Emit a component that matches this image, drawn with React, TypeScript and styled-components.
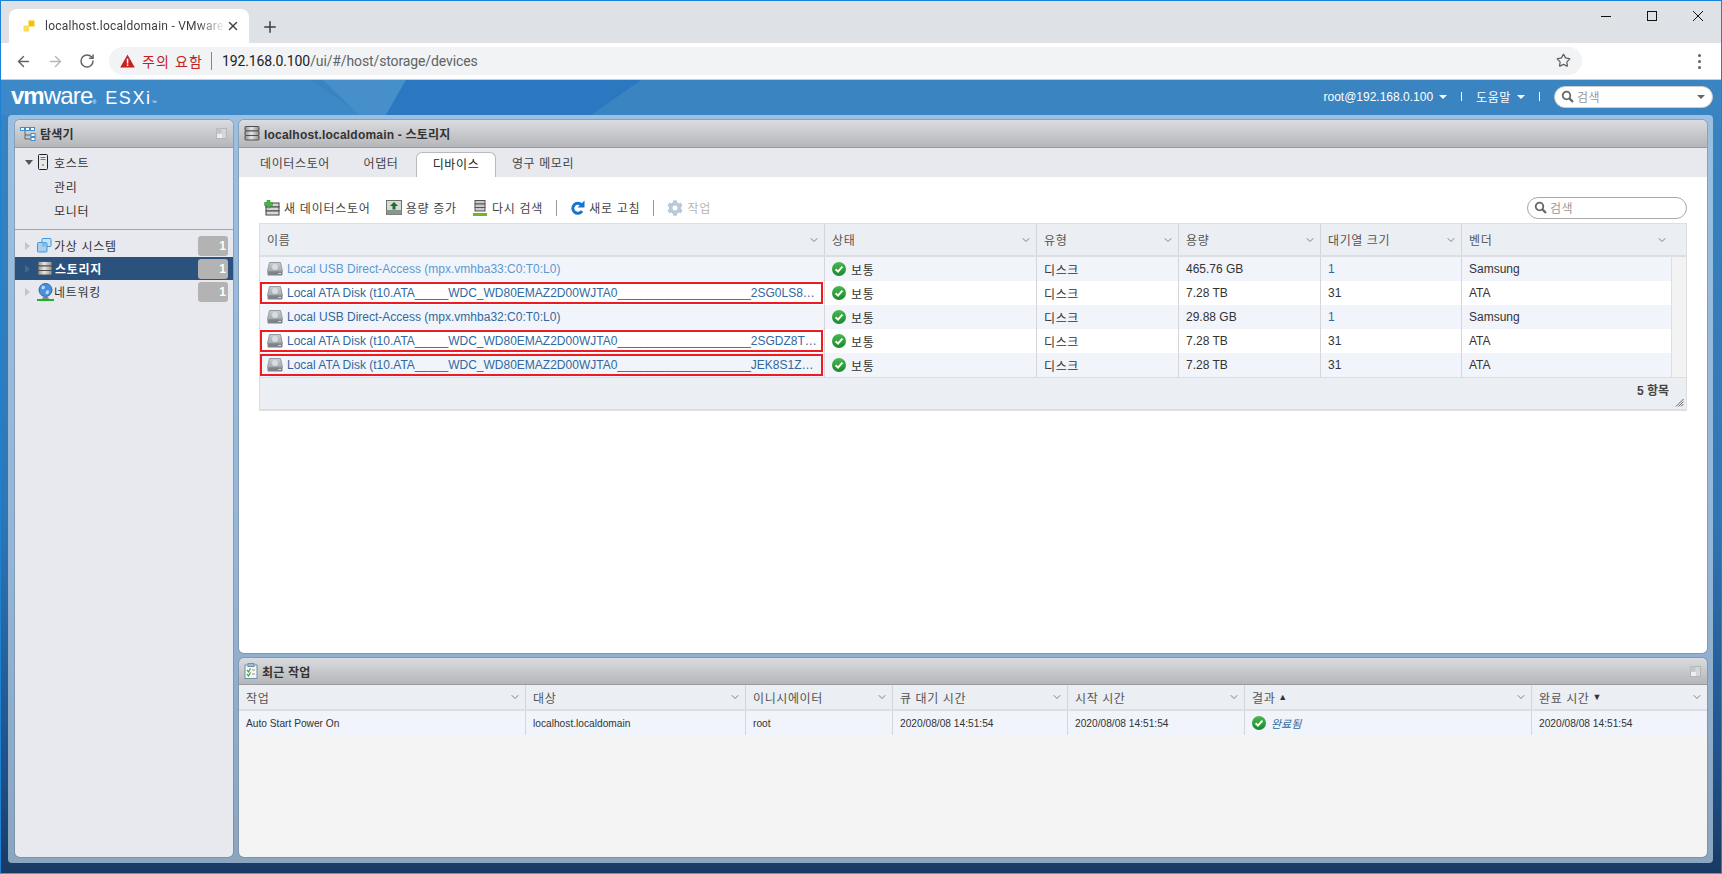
import styled, { createGlobalStyle } from "styled-components";
import { ArrowLeft, ArrowRight, ChevronDown, Plus, RotateCw, Star, X } from "lucide-react";
import { FaCog } from "react-icons/fa";

const FONT = `"Liberation Sans", "Noto Sans CJK KR", sans-serif`;

const GlobalStyle = createGlobalStyle`
  html, body { margin: 0; padding: 0; background: #fff; }
  body { font-family: ${FONT}; font-size: 12px; color: #333; overflow: hidden; }
  * { box-sizing: border-box; }
`;

const Page = styled.div`
  width: 1722px;
  height: 874px;
  display: flex;
  flex-direction: column;
  border: 1px solid #1b82d6;
  border-bottom-color: #7c8ea3;
  overflow: hidden;
`;

/* browser chrome */
const TabStrip = styled.div`
  height: 42px;
  flex-shrink: 0;
  background: #dee1e6;
  display: flex;
  align-items: flex-end;
  padding-left: 8px;
`;

const BrowserTab = styled.div`
  width: 240px;
  height: 34px;
  background: #fff;
  border-radius: 8px 8px 0 0;
  display: flex;
  align-items: center;
  padding: 0 9px 0 14px;
`;

const TabTitle = styled.span`
  font-family: Roboto, "Liberation Sans", sans-serif;
  font-size: 12px;
  letter-spacing: 0.25px;
  color: #3c4043;
  margin-left: 10px;
  flex: 1;
  white-space: nowrap;
  -webkit-mask-image: linear-gradient(to right, #000 84%, transparent 100%);
  mask-image: linear-gradient(to right, #000 84%, transparent 100%);
`;

const NewTab = styled.div`
  width: 18px;
  height: 18px;
  margin: 0 0 7px 12px;
  color: #3c4043;
  display: flex;
`;

const Spacer = styled.div`
  flex: 1;
`;

const WinControls = styled.div`
  display: flex;
  align-self: flex-start;
  height: 29px;
`;

const WinButton = styled.div`
  width: 46px;
  height: 29px;
  display: flex;
  align-items: center;
  justify-content: center;
`;

const BrowserBar = styled.div`
  height: 37px;
  flex-shrink: 0;
  background: #fff;
  border-bottom: 1px solid #ccc;
  display: flex;
  align-items: center;
  padding: 0 0 0 14px;
`;

const NavButton = styled.div<{ $dim?: boolean }>`
  width: 32px;
  display: flex;
  align-items: center;
  color: ${(p) => (p.$dim ? "#b4b6b9" : "#5f6368")};
`;

const Omnibox = styled.div`
  width: 1473px;
  height: 28px;
  margin-left: -2px;
  margin-top: -1px;
  border-radius: 14px;
  background: #f1f3f4;
  display: flex;
  align-items: center;
  padding: 0 11px 0 11px;
`;

const WarnLabel = styled.span`
  margin-left: 7px;
  font-size: 14px;
  color: #c5221f;
  letter-spacing: 1.1px;
`;

const OmniDivider = styled.span`
  width: 1px;
  height: 18px;
  margin: 0 10px 0 8px;
  background: #80868b;
`;

const Url = styled.span`
  flex: 1;
  font-family: Roboto, "Liberation Sans", sans-serif;
  font-size: 14px;
  letter-spacing: -0.12px;
  color: #5f6368;
`;

const UrlHost = styled.span`
  color: #202124;
`;

const MenuDots = styled.div`
  display: flex;
  flex-direction: column;
  gap: 3px;
  margin-left: 116px;
`;

const MenuDot = styled.span`
  width: 3px;
  height: 3px;
  border-radius: 50%;
  background: #5f6368;
`;

/* esxi app */
const Esxi = styled.div`
  flex: 1;
  min-height: 0;
  display: flex;
  flex-direction: column;
  background: linear-gradient(to bottom, #3a84c2 0%, #2f76b4 55%, #1f4f85 88%, #193a63 100%);
`;

const TopBar = styled.div`
  position: relative;
  height: 35px;
  flex-shrink: 0;
  display: flex;
  align-items: center;
  padding: 0 8px 0 10px;
  color: #fff;
`;

const TopDecor = styled.svg`
  position: absolute;
  left: 0;
  top: 0;
`;

const Logo = styled.div`
  position: relative;
  display: flex;
  align-items: baseline;
  color: #fff;
  white-space: nowrap;
  margin-top: -3px;
`;

const LogoVm = styled.span`
  font-size: 24px;
  font-weight: 700;
  letter-spacing: -1px;
`;

const LogoWare = styled.span`
  font-size: 24px;
  letter-spacing: -0.8px;
`;

const LogoEsxi = styled.span`
  font-size: 18px;
  margin-left: 9px;
  letter-spacing: 1.6px;
`;

const LogoMark = styled.sup`
  font-size: 5px;
  line-height: 0;
  vertical-align: 11px;
`;

const TopMenu = styled.div`
  position: relative;
  display: flex;
  align-items: center;
  font-size: 12px;
  font-weight: 400;
  margin-top: -2px;
`;

const Caret = styled.span<{ $color?: string }>`
  display: inline-block;
  width: 0;
  height: 0;
  margin-left: 6px;
  border-left: 4px solid transparent;
  border-right: 4px solid transparent;
  border-top: 4px solid ${(p) => p.$color || "#fff"};
`;

const TopSep = styled.span`
  width: 1px;
  height: 9px;
  margin: 0 14px 0 14px;
  background: #fff;
`;

const TopSearch = styled.div`
  width: 159px;
  height: 22px;
  background: #fff;
  border: 1px solid #ccc;
  border-radius: 11px;
  display: flex;
  align-items: center;
  padding: 0 7px 0 6px;
  color: #999;
`;

const SearchLabel = styled.span`
  flex: 1;
  margin-left: 3px;
  color: #999;
  letter-spacing: 0.5px;
`;

const Frame = styled.div`
  flex: 1;
  min-height: 0;
  margin: 0 8px 10px 7px;
  padding: 5px 6px 6px 7px;
  border-radius: 4px;
  background: linear-gradient(to bottom, #9bc0e2 0%, #94b5d6 60%, #8aa5c0 100%);
  display: flex;
  gap: 6px;
`;

const Panel = styled.section<{ $height?: number }>`
  display: flex;
  flex-direction: column;
  border-radius: 5px;
  overflow: hidden;
  box-shadow: 0 0 0 1px rgba(110, 125, 140, 0.45);
  ${(p) => (p.$height ? `height: ${p.$height}px; flex-shrink: 0;` : "flex: 1; min-height: 0;")}
`;

const Sidebar = styled(Panel)`
  width: 218px;
  flex: none;
  background: #e8e9ee;
`;

const RightColumn = styled.div`
  flex: 1;
  display: flex;
  flex-direction: column;
  gap: 5px;
  min-width: 0;
`;

const PanelHead = styled.header<{ $h: number }>`
  height: ${(p) => p.$h}px;
  flex-shrink: 0;
  background: linear-gradient(to bottom, #dbdcdf, #b5b6b9);
  border-bottom: 1px solid #9a9a9c;
  display: flex;
  align-items: center;
  padding: 0 6px 0 5px;
  gap: 4px;
  color: #333;
  font-weight: 700;
  white-space: nowrap;
`;

const HeadTitle = styled.span`
  flex: 1;
  letter-spacing: 0.2px;
`;

const HostTree = styled.div`
  height: 82px;
  padding-top: 1px;
  border-bottom: 1px solid #a3a4a6;
  flex-shrink: 0;
`;

const TreeRow = styled.div<{ $active?: boolean; $h?: number }>`
  height: ${(p) => p.$h || 23}px;
  display: flex;
  align-items: center;
  background: ${(p) => (p.$active ? "#2a527c" : "transparent")};
  color: ${(p) => (p.$active ? "#fff" : "#333")};
  font-weight: ${(p) => (p.$active ? 700 : 400)};
  padding-right: 5px;
`;

const TreeArrow = styled.span<{ $open?: boolean; $active?: boolean }>`
  width: 0;
  height: 0;
  margin-left: 10px;
  margin-right: ${(p) => (p.$open ? "5px" : "7px")};
  ${(p) =>
    p.$open
      ? "border-left: 4px solid transparent; border-right: 4px solid transparent; border-top: 5px solid #555;"
      : `border-top: 4px solid transparent; border-bottom: 4px solid transparent; border-left: 5px solid ${p.$active ? "#44688f" : "#c4c5c8"};`}
`;

const TreeLabel = styled.span<{ $indent?: number }>`
  flex: 1;
  margin-left: ${(p) => p.$indent ?? 2}px;
  letter-spacing: 0.7px;
`;

const Badge = styled.span`
  width: 30px;
  height: 20px;
  border-radius: 3px;
  background: #b3b3b3;
  color: #fff;
  font-weight: 700;
  text-align: right;
  line-height: 20px;
  padding-right: 2px;
`;

const NavGroup = styled.div`
  padding-top: 4px;
`;

const Tabs = styled.nav`
  height: 29px;
  flex-shrink: 0;
  background: #e8e9ee;
  display: flex;
  align-items: flex-end;
  padding-left: 5px;
`;

const TabItem = styled.div<{ $active?: boolean; $w: number }>`
  width: ${(p) => p.$w}px;
  height: 25px;
  line-height: 24px;
  text-align: center;
  letter-spacing: 0.6px;
  color: #444;
  ${(p) =>
    p.$active
      ? "background: #fff; border: 1px solid #b9babc; border-bottom: 0; border-radius: 6px 6px 0 0; color: #222;"
      : ""}
`;

const Content = styled.div`
  flex: 1;
  min-height: 0;
  background: #fff;
  padding: 0 20px;
`;

const Actions = styled.div`
  height: 46px;
  display: flex;
  align-items: center;
  padding: 15px 0 0 5px;
`;

const Action = styled.div<{ $off?: boolean }>`
  display: flex;
  align-items: center;
  gap: 4px;
  margin-right: 15px;
  letter-spacing: 0.75px;
  color: ${(p) => (p.$off ? "#b5b5b5" : "#444")};
`;

const ActionSep = styled.span`
  width: 1px;
  height: 16px;
  background: #999;
  margin: 0 13px 0 -2px;
`;

const FilterBox = styled.div`
  width: 160px;
  height: 22px;
  border: 1px solid #a9a9a9;
  border-radius: 11px;
  background: #fff;
  display: flex;
  align-items: center;
  padding: 0 6px;
`;

const Table = styled.div`
  border: 1px solid #dcdee0;
  border-width: 1px 1px 2px 1px;
`;

const HeadRow = styled.div<{ $cols: string; $h: number }>`
  display: grid;
  grid-template-columns: ${(p) => p.$cols};
  height: ${(p) => p.$h}px;
  flex-shrink: 0;
  background: #ebeef2;
  border-bottom: 2px solid #dcdee0;
`;

const HeadCell = styled.div<{ $pad?: number }>`
  display: flex;
  align-items: center;
  padding: 0 ${(p) => p.$pad ?? 4}px 0 7px;
  border-right: 1px solid #d3d5d8;
  color: #555;
  letter-spacing: 0.6px;
  white-space: nowrap;
  &:last-child { border-right: 0; }
`;

const HeadText = styled.span`
  flex: 1;
  display: flex;
  align-items: center;
  gap: 3px;
`;

const SortMark = styled.span`
  font-size: 9px;
  color: #333;
`;

const Body = styled.div`
  display: flex;
`;

const Rows = styled.div`
  flex: 1;
  min-width: 0;
`;

const Gutter = styled.div`
  width: 15px;
  background: #f3f3f3;
  border-left: 1px solid #dcdee0;
`;

const Row = styled.div<{ $cols: string; $odd?: boolean; $h: number }>`
  display: grid;
  grid-template-columns: ${(p) => p.$cols};
  height: ${(p) => p.$h}px;
  flex-shrink: 0;
  background: ${(p) => (p.$odd ? "#f1f5fb" : "#fff")};
`;

const Cell = styled.div<{ $small?: boolean }>`
  display: flex;
  align-items: center;
  gap: 5px;
  padding: 0 7px;
  border-right: 1px solid #d3d5d8;
  color: #333;
  font-size: ${(p) => (p.$small ? "10.2px" : "12px")};
  white-space: nowrap;
  overflow: hidden;
  &:last-child { border-right: 0; }
`;

const NameCell = styled(Cell)<{ $marked?: boolean; $light?: boolean }>`
  position: relative;
  gap: 4px;
  color: ${(p) => (p.$light ? "#5a9ad2" : "#30689f")};
  ${(p) =>
    p.$marked
      ? `&::after {
           content: "";
           position: absolute;
           top: 1px;
           bottom: 1px;
           left: 0;
           right: 1px;
           border: 2px solid #ed1c24;
         }`
      : ""}
`;

const Ellipsis = styled.span`
  flex: 1;
  min-width: 0;
  overflow: hidden;
  text-overflow: ellipsis;
`;

const Ko = styled.span`
  letter-spacing: 0.6px;
`;

const LinkNum = styled.span`
  color: #30689f;
`;

const DoneLabel = styled.span`
  font-style: italic;
  font-size: 11px;
  color: #30689f;
`;

const TableFoot = styled.div`
  position: relative;
  height: 32px;
  background: #ebeef2;
  border-top: 1px solid #dcdee0;
  display: flex;
  align-items: center;
  justify-content: flex-end;
  padding: 0 17px 8px 0;
  font-weight: 700;
  color: #444;
`;

const Grip = styled.svg`
  position: absolute;
  right: 2px;
  bottom: 2px;
`;

const TasksBody = styled.div`
  flex: 1;
  background: #f4f4f4;
`;

/* ---- icons ---- */
const Favicon = () => (
  <svg width="12" height="12" viewBox="0 0 12 12">
    <rect x="5.5" y="0.5" width="6" height="6" fill="#f4c20d" />
    <rect x="0.5" y="5.5" width="5.5" height="6" fill="#fbdc5c" />
  </svg>
);

const Warning = () => (
  <svg width="15" height="14" viewBox="0 0 15 14">
    <path d="M7.5 0.5 L14.8 13.5 H0.2 Z" fill="#c5221f" />
    <rect x="6.8" y="4.6" width="1.5" height="5" fill="#fff" />
    <rect x="6.8" y="10.4" width="1.5" height="1.5" fill="#fff" />
  </svg>
);

const StorageIcon = () => (
  <svg width="16" height="15" viewBox="0 0 16 15">
    <defs>
      <linearGradient id="disc" x1="0" x2="1" y1="0" y2="0">
        <stop offset="0" stopColor="#8f8f8f" />
        <stop offset="0.45" stopColor="#e6e6e6" />
        <stop offset="1" stopColor="#8c8c8c" />
      </linearGradient>
    </defs>
    {[0.5, 5, 9.5].map((y) => (
      <rect key={y} x="1" y={y} width="14" height="4.5" rx="0.8" fill="url(#disc)" stroke="#505050" strokeWidth="1" />
    ))}
  </svg>
);

const DiskIcon = () => (
  <svg width="16" height="14" viewBox="0 0 16 14">
    <defs>
      <linearGradient id="hdd" x1="0" x2="0" y1="0" y2="1">
        <stop offset="0" stopColor="#c9ced3" />
        <stop offset="1" stopColor="#a0a8ae" />
      </linearGradient>
    </defs>
    <path d="M2.5 0.5 H13.5 L15.5 9.5 H0.5 Z" fill="url(#hdd)" stroke="#959ba1" />
    <rect x="0.5" y="9.5" width="15" height="4" rx="1" fill="#7d8388" />
    <circle cx="8" cy="5" r="3" fill="#d8dcdf" />
    <rect x="11.5" y="11" width="2.5" height="1" fill="#d8e8d8" />
  </svg>
);

const CheckIcon = () => (
  <svg width="14" height="14" viewBox="0 0 14 14">
    <defs>
      <linearGradient id="ok" x1="0" x2="0" y1="0" y2="1">
        <stop offset="0" stopColor="#4cb84f" />
        <stop offset="1" stopColor="#16892f" />
      </linearGradient>
    </defs>
    <circle cx="7" cy="7" r="7" fill="url(#ok)" />
    <path d="M3.6 7.2 L6 9.6 L10.4 4.6" stroke="#fff" strokeWidth="2" fill="none" />
  </svg>
);

const SearchGlyph = () => (
  <svg width="13" height="13" viewBox="0 0 13 13">
    <circle cx="5.5" cy="5.5" r="3.8" fill="none" stroke="#666" strokeWidth="1.8" />
    <path d="M8.4 8.4 L12 12" stroke="#666" strokeWidth="2.2" />
  </svg>
);

const ExplorerIcon = () => (
  <svg width="16" height="16" viewBox="0 0 16 16">
    <path d="M5 4 V13 H11 M5 9 H11" stroke="#666" fill="none" />
    {[0, 5, 10].map((x) => (
      <rect key={x} x={x + 0.5} y="1.5" width="4" height="3" fill="#fff" stroke="#3e8ed0" />
    ))}
    <rect x="11" y="7.5" width="4" height="3" fill="#fff" stroke="#3e8ed0" />
    <rect x="11" y="11.5" width="4" height="3" fill="#fff" stroke="#3e8ed0" />
  </svg>
);

const CollapseIcon = () => (
  <svg width="11" height="11" viewBox="0 0 11 11">
    <rect x="0.5" y="0.5" width="10" height="10" fill="#d5d6d9" stroke="#b3b4b6" />
    <rect x="0.5" y="0.5" width="5" height="5" fill="#c4c5c8" />
    <rect x="1" y="6" width="5" height="4" fill="#eee" />
  </svg>
);

const HostIcon = () => (
  <svg width="10" height="16" viewBox="0 0 10 16">
    <rect x="0.5" y="0.5" width="9" height="15" rx="1" fill="#e9e9e9" stroke="#222" />
    <rect x="2.5" y="3" width="5" height="1" fill="#777" />
    <rect x="2.5" y="5" width="5" height="1" fill="#777" />
    <circle cx="5" cy="11" r="1" fill="#888" />
  </svg>
);

const VmIcon = () => (
  <svg width="15" height="15" viewBox="0 0 15 15">
    <rect x="5" y="0.5" width="9" height="8" rx="1" fill="#c8e2f6" stroke="#3f97d8" />
    <rect x="0.5" y="4.5" width="9.5" height="9.5" rx="1" fill="#a8d0ee" stroke="#3f97d8" />
    <rect x="5" y="4.5" width="5" height="4" fill="#7fb8e3" />
  </svg>
);

const NetIcon = () => (
  <svg width="17" height="18" viewBox="0 0 17 18">
    <circle cx="8.5" cy="7" r="6.5" fill="#4b8fdc" stroke="#2c67b4" />
    <path d="M5 3 C8 2 9 5 7 6 C5 7 4 6 5 3 M9 8 C12 6 13 9 11 11 C9 12 8 10 9 8" fill="#b8daf6" />
    <path d="M6 14 H11 L12 16 H5 Z" fill="#888" />
    <rect x="0" y="16" width="17" height="2" fill="#22b02a" />
  </svg>
);

const NewStoreIcon = () => (
  <svg width="16" height="16" viewBox="0 0 16 16">
    <rect x="2" y="3" width="13" height="4" fill="#d7d7d7" stroke="#444" />
    <rect x="2" y="7" width="13" height="4" fill="#d7d7d7" stroke="#444" />
    <rect x="2" y="11" width="13" height="4" fill="#d7d7d7" stroke="#444" />
    <path d="M3 0 H6 V2.5 H8.5 V5.5 H6 V8 H3 V5.5 H0.5 V2.5 H3 Z" fill="#46b449" stroke="#2c8a30" strokeWidth="0.5" />
  </svg>
);

const GrowIcon = () => (
  <svg width="16" height="15" viewBox="0 0 16 15">
    <rect x="0.5" y="0.5" width="15" height="14" fill="#d4dcd4" stroke="#6b736b" />
    <rect x="0.5" y="10" width="15" height="4.5" fill="#8d948d" />
    <path d="M8 2 L12 6 H9.5 V9.5 H6.5 V6 H4 Z" fill="#1c6e2a" />
  </svg>
);

const RescanIcon = () => (
  <svg width="16" height="16" viewBox="0 0 16 16">
    <rect x="3" y="0.5" width="10" height="3.5" fill="#c9c9c9" stroke="#555" />
    <rect x="3" y="4" width="10" height="3.5" fill="#c9c9c9" stroke="#555" />
    <rect x="3" y="7.5" width="10" height="3.5" fill="#c9c9c9" stroke="#555" />
    <rect x="1" y="13" width="14" height="3" fill="#6fb52c" />
  </svg>
);

const RefreshIcon = () => (
  <svg width="15" height="16" viewBox="0 0 15 16">
    <path d="M11.5 5 A5 5 0 1 0 12 11" fill="none" stroke="#1874cd" strokeWidth="3" />
    <path d="M14.5 0.5 V7.5 H7.5 Z" fill="#1874cd" />
  </svg>
);

const TaskIcon = () => (
  <svg width="14" height="16" viewBox="0 0 14 16">
    <rect x="1" y="2" width="12" height="13.5" fill="#f5f5f5" stroke="#6d90ad" />
    <rect x="4" y="0.5" width="6" height="3" fill="#a3bdd2" stroke="#6d90ad" />
    <path d="M3 7 L4.5 9 L6.5 5.5 M3 11 L4.5 13 L6.5 9.5" stroke="#34a23a" fill="none" strokeWidth="1.2" />
    <path d="M8 7 H11 M8 11 H11" stroke="#999" />
  </svg>
);

const HeadChevron = () => <ChevronDown size={12} color="#666" strokeWidth={1.6} />;

const DEVICE_COLS = "565px 212px 142px 142px 141px 1fr";
const TASK_COLS = "287px 220px 147px 175px 177px 287px 1fr";

const ATA = "Local ATA Disk (t10.ATA_____WDC_WD80EMAZ2D00WJTA0____________________";

const devices = [
  { name: "Local USB Direct-Access (mpx.vmhba33:C0:T0:L0)", light: true, cap: "465.76 GB", queue: "1", vendor: "Samsung" },
  { name: `${ATA}2SG0LS8TXXXX`, marked: true, cap: "7.28 TB", queue: "31", vendor: "ATA" },
  { name: "Local USB Direct-Access (mpx.vmhba32:C0:T0:L0)", cap: "29.88 GB", queue: "1", vendor: "Samsung" },
  { name: `${ATA}2SGDZ8TXXXXX`, marked: true, cap: "7.28 TB", queue: "31", vendor: "ATA" },
  { name: `${ATA}JEK8S1ZNXXXX`, marked: true, cap: "7.28 TB", queue: "31", vendor: "ATA" },
];

const deviceHeads = ["이름", "상태", "유형", "용량", "대기열 크기", "벤더"];
const tabs = [
  { label: "데이터스토어", w: 102 },
  { label: "어댑터", w: 70 },
  { label: "디바이스", w: 80, active: true },
  { label: "영구 메모리", w: 94 },
];

function App() {
  return (
    <Page>
      <GlobalStyle />
      <TabStrip>
        <BrowserTab>
          <Favicon />
          <TabTitle>localhost.localdomain - VMware</TabTitle>
          <X size={14} color="#3c4043" strokeWidth={2.4} />
        </BrowserTab>
        <NewTab>
          <Plus size={18} strokeWidth={2} />
        </NewTab>
        <Spacer />
        <WinControls>
          <WinButton>
            <svg width="10" height="10" viewBox="0 0 10 10"><path d="M0 5.5 H10" stroke="#111" /></svg>
          </WinButton>
          <WinButton>
            <svg width="10" height="10" viewBox="0 0 10 10"><rect x="0.5" y="0.5" width="9" height="9" fill="none" stroke="#111" /></svg>
          </WinButton>
          <WinButton>
            <svg width="10" height="10" viewBox="0 0 10 10"><path d="M0 0 L10 10 M10 0 L0 10" stroke="#111" /></svg>
          </WinButton>
        </WinControls>
      </TabStrip>

      <BrowserBar>
        <NavButton><ArrowLeft size={17} strokeWidth={2} /></NavButton>
        <NavButton $dim><ArrowRight size={17} strokeWidth={2} /></NavButton>
        <NavButton><RotateCw size={16} strokeWidth={2.2} /></NavButton>
        <Omnibox>
          <Warning />
          <WarnLabel>주의 요함</WarnLabel>
          <OmniDivider />
          <Url><UrlHost>192.168.0.100</UrlHost>/ui/#/host/storage/devices</Url>
          <Star size={15} color="#5f6368" strokeWidth={2} />
        </Omnibox>
        <MenuDots>
          <MenuDot />
          <MenuDot />
          <MenuDot />
        </MenuDots>
      </BrowserBar>

      <Esxi>
        <TopBar>
          <TopDecor width="1720" height="35" viewBox="0 0 1720 35">
            <path d="M0 0 H310 L360 35 H0 Z" fill="#3d89c7" />
            <path d="M322 0 H405 L385 35 H358 Z" fill="#468fca" />
            <path d="M405 0 H1720 V35 H385 Z" fill="#2b78c1" />
            <path d="M640 0 H1720 V35 H590 Z" fill="#3a84c1" />
          </TopDecor>
          <Logo>
            <LogoVm>vm</LogoVm>
            <LogoWare>ware</LogoWare>
            <LogoMark>®</LogoMark>
            <LogoEsxi>ESXi</LogoEsxi>
            <LogoMark>™</LogoMark>
          </Logo>
          <Spacer />
          <TopMenu>
            <span>root@192.168.0.100</span>
            <Caret />
            <TopSep />
            <Ko>도움말</Ko>
            <Caret />
            <TopSep />
            <TopSearch>
              <SearchGlyph />
              <SearchLabel>검색</SearchLabel>
              <Caret $color="#666" />
            </TopSearch>
          </TopMenu>
        </TopBar>

        <Frame>
          <Sidebar>
            <PanelHead $h={28}>
              <ExplorerIcon />
              <HeadTitle>탐색기</HeadTitle>
              <CollapseIcon />
            </PanelHead>
            <HostTree>
              <TreeRow $h={26}>
                <TreeArrow $open />
                <HostIcon />
                <TreeLabel $indent={6}>호스트</TreeLabel>
              </TreeRow>
              <TreeRow $h={23}><TreeLabel $indent={39}>관리</TreeLabel></TreeRow>
              <TreeRow $h={25}><TreeLabel $indent={39}>모니터</TreeLabel></TreeRow>
            </HostTree>
            <NavGroup>
              <TreeRow>
                <TreeArrow />
                <VmIcon />
                <TreeLabel>가상 시스템</TreeLabel>
                <Badge>1</Badge>
              </TreeRow>
              <TreeRow $active>
                <TreeArrow $active />
                <StorageIcon />
                <TreeLabel>스토리지</TreeLabel>
                <Badge>1</Badge>
              </TreeRow>
              <TreeRow>
                <TreeArrow />
                <NetIcon />
                <TreeLabel $indent={0}>네트워킹</TreeLabel>
                <Badge>1</Badge>
              </TreeRow>
            </NavGroup>
          </Sidebar>

          <RightColumn>
            <Panel>
              <PanelHead $h={28}>
                <StorageIcon />
                <HeadTitle>localhost.localdomain - 스토리지</HeadTitle>
              </PanelHead>
              <Tabs>
                {tabs.map((t) => (
                  <TabItem key={t.label} $w={t.w} $active={t.active}>{t.label}</TabItem>
                ))}
              </Tabs>
              <Content>
                <Actions>
                  <Action><NewStoreIcon />새 데이터스토어</Action>
                  <Action><GrowIcon />용량 증가</Action>
                  <Action><RescanIcon />다시 검색</Action>
                  <ActionSep />
                  <Action><RefreshIcon />새로 고침</Action>
                  <ActionSep />
                  <Action $off><FaCog size={16} color="#b9c9da" />작업</Action>
                  <Spacer />
                  <FilterBox>
                    <SearchGlyph />
                    <SearchLabel>검색</SearchLabel>
                  </FilterBox>
                </Actions>
                <Table>
                  <HeadRow $cols={DEVICE_COLS} $h={33}>
                    {deviceHeads.map((h, i) => (
                      <HeadCell key={h} $pad={i === deviceHeads.length - 1 ? 18 : 4}>
                        <HeadText>{h}</HeadText>
                        <HeadChevron />
                      </HeadCell>
                    ))}
                  </HeadRow>
                  <Body>
                    <Rows>
                      {devices.map((d, i) => (
                        <Row key={d.name} $cols={DEVICE_COLS.replace("1fr", "211px")} $odd={i % 2 === 0} $h={24}>
                          <NameCell $marked={d.marked} $light={d.light}>
                            <DiskIcon />
                            <Ellipsis>{d.name}</Ellipsis>
                          </NameCell>
                          <Cell><CheckIcon /><Ko>보통</Ko></Cell>
                          <Cell><Ko>디스크</Ko></Cell>
                          <Cell>{d.cap}</Cell>
                          <Cell>{d.queue === "1" ? <LinkNum>1</LinkNum> : d.queue}</Cell>
                          <Cell>{d.vendor}</Cell>
                        </Row>
                      ))}
                    </Rows>
                    <Gutter />
                  </Body>
                  <TableFoot>
                    5 항목
                    <Grip width="9" height="9" viewBox="0 0 9 9">
                      <path d="M8.5 1 L1 8.5 M8.5 3.5 L3.5 8.5 M8.5 6 L6 8.5" stroke="#666" />
                    </Grip>
                  </TableFoot>
                </Table>
              </Content>
            </Panel>

            <Panel $height={199}>
              <PanelHead $h={27}>
                <TaskIcon />
                <HeadTitle>최근 작업</HeadTitle>
                <CollapseIcon />
              </PanelHead>
              <HeadRow $cols={TASK_COLS} $h={26}>
                <HeadCell><HeadText>작업</HeadText><HeadChevron /></HeadCell>
                <HeadCell><HeadText>대상</HeadText><HeadChevron /></HeadCell>
                <HeadCell><HeadText>이니시에이터</HeadText><HeadChevron /></HeadCell>
                <HeadCell><HeadText>큐 대기 시간</HeadText><HeadChevron /></HeadCell>
                <HeadCell><HeadText>시작 시간</HeadText><HeadChevron /></HeadCell>
                <HeadCell><HeadText>결과 <SortMark>▲</SortMark></HeadText><HeadChevron /></HeadCell>
                <HeadCell><HeadText>완료 시간 <SortMark>▼</SortMark></HeadText><HeadChevron /></HeadCell>
              </HeadRow>
              <Row $cols={TASK_COLS} $odd $h={24}>
                <Cell $small>Auto Start Power On</Cell>
                <Cell $small>localhost.localdomain</Cell>
                <Cell $small>root</Cell>
                <Cell $small>2020/08/08 14:51:54</Cell>
                <Cell $small>2020/08/08 14:51:54</Cell>
                <Cell $small><CheckIcon /><DoneLabel>완료됨</DoneLabel></Cell>
                <Cell $small>2020/08/08 14:51:54</Cell>
              </Row>
              <TasksBody />
            </Panel>
          </RightColumn>
        </Frame>
      </Esxi>
    </Page>
  );
}

export default App;
